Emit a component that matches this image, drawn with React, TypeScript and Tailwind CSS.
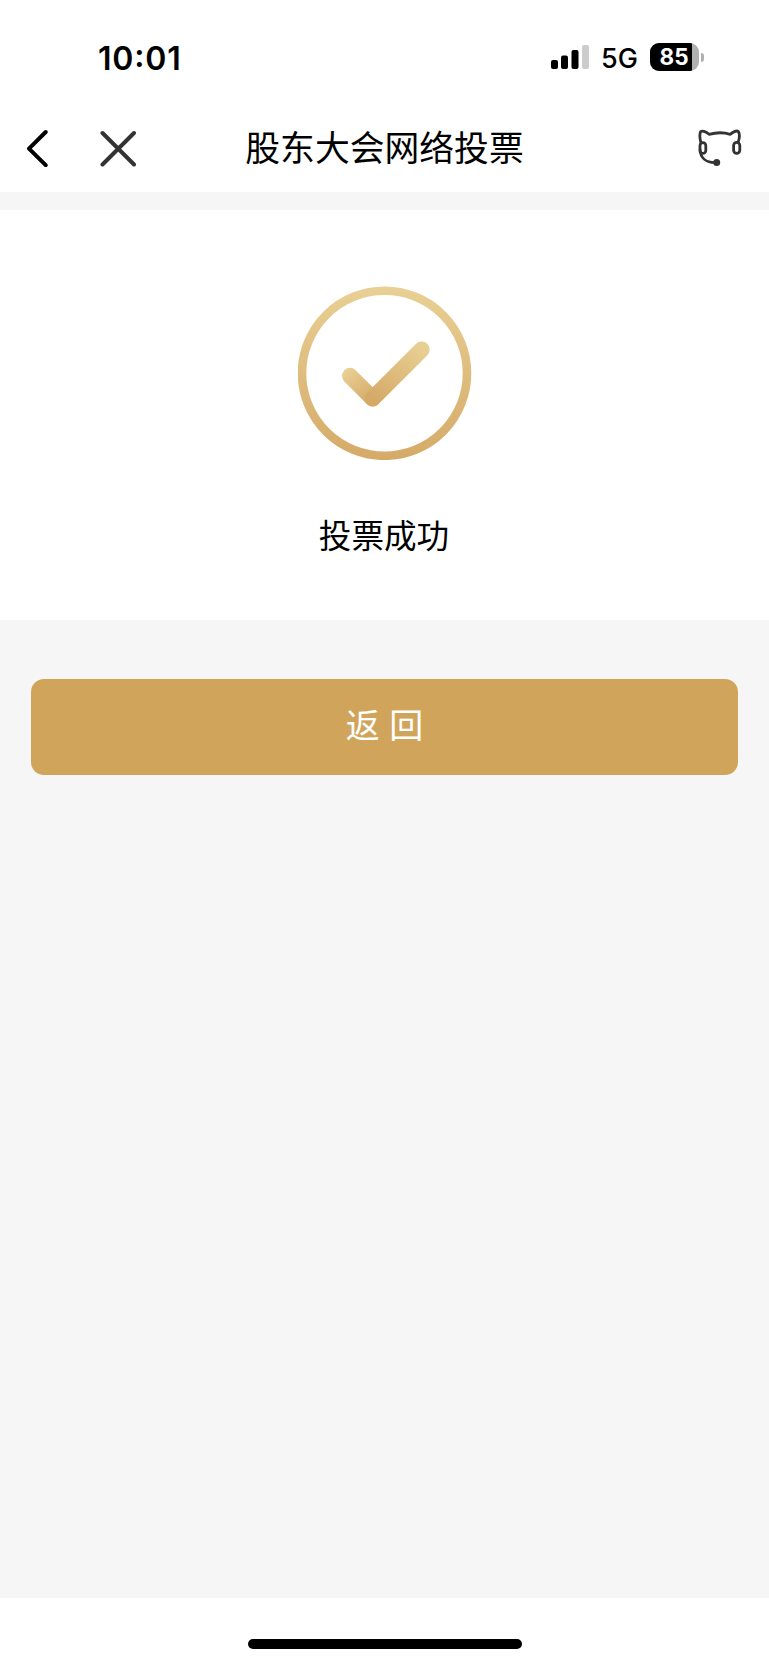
import React from 'react';

/** 状态栏：时间、信号、网络与电量 */
const StatusBar: React.FC = () => (
  <div className="flex h-[104px] items-start justify-between pt-[38px] pr-[65px] pl-[98px] font-['Inter',sans-serif] text-black">
    <span className="text-[32px] leading-[41px] font-semibold tracking-[0.8px] [font-feature-settings:'case'_1]">
      10:01
    </span>
    <div className="flex h-[38px] items-center">
      <svg className="h-[26px] w-[39px]" viewBox="0 0 39 26" aria-hidden="true">
        <rect x="0" y="16" width="7" height="9" rx="2" fill="#000" />
        <rect x="10" y="11.5" width="7" height="13.5" rx="2" fill="#000" />
        <rect x="20.5" y="6" width="7" height="19" rx="2" fill="#000" />
        <rect x="31" y="1" width="7" height="24" rx="2" fill="#ccc" />
      </svg>
      <span className="ml-[11px] w-[38px] pt-[3px] text-[27px] leading-[38px] font-[450]">5G</span>
      <div className="ml-[11px] flex h-[28px] w-[49px] overflow-hidden rounded-[9px] bg-[#b0b0b0]">
        <div className="flex w-[42px] items-center justify-center bg-black pl-[6px] text-[22.5px] leading-[28px] font-bold text-white">
          85
        </div>
      </div>
      <div className="ml-[2px] h-[9px] w-[3px] rounded-r-full bg-[#b0b0b0]" />
    </div>
  </div>
);

/** 导航栏：返回、关闭、标题与客服入口 */
const NavBar: React.FC = () => (
  <div className="flex h-[88px] items-start justify-between pr-[26px] pl-[26px]">
    <div className="flex w-[120px] justify-between pt-[25px]">
      <button aria-label="返回">
        <svg className="h-[38px] w-[24px]" viewBox="0 0 24 38" fill="none">
          <path
            d="M19.7 3L3 19.6L19.7 36.2"
            stroke="#000"
            strokeWidth="4"
            strokeLinecap="round"
            strokeLinejoin="round"
          />
        </svg>
      </button>
      <button aria-label="关闭" className="mr-[9px]">
        <svg className="h-[38px] w-[37px]" viewBox="0 0 37 38" fill="none">
          <path
            d="M2.5 4L34 35.5M34 4L2.5 35.5"
            stroke="#333"
            strokeWidth="4"
            strokeLinecap="round"
          />
        </svg>
      </button>
    </div>
    <h1 className="pt-[16px] text-[34.8px] leading-[52px] font-normal whitespace-nowrap">
      股东大会网络投票
    </h1>
    <div className="flex w-[120px] justify-end pt-[20px]">
      <button aria-label="客服">
        <svg
          className="h-[44px] w-[46px]"
          viewBox="0 0 46 44"
          fill="none"
          stroke="#333"
          strokeWidth="2.8"
          strokeLinecap="round"
          strokeLinejoin="round"
        >
          <path d="M4 19C2.6 14 2.4 10 3.7 7.5C4.8 6.6 8.6 7.2 12.1 10.3C18.5 8.5 27.5 8.5 33.4 10.3C36.9 7.2 40.2 6.6 41.4 7.5C42.7 10 42.7 14 41.2 18" />
          <rect x="3" y="18.6" width="5.8" height="10.8" rx="2.9" />
          <rect x="36.6" y="18.3" width="6.2" height="11" rx="3.1" />
          <path d="M3.1 26C3.5 34 9 38.6 18 38.6" />
          <circle cx="19.7" cy="38.6" r="3.5" fill="#333" stroke="none" />
        </svg>
      </button>
    </div>
  </div>
);

/** 成功图标：渐变圆环与对勾 */
const SuccessIcon: React.FC = () => (
  <svg className="h-[174px] w-[174px]" viewBox="0 0 174 174" fill="none" aria-hidden="true">
    <defs>
      <linearGradient id="ring" x1="87" y1="0" x2="87" y2="174" gradientUnits="userSpaceOnUse">
        <stop stopColor="#e9d094" />
        <stop offset="1" stopColor="#d5aa68" />
      </linearGradient>
      <linearGradient id="tick" x1="122" y1="58" x2="80" y2="116" gradientUnits="userSpaceOnUse">
        <stop stopColor="#e8d094" />
        <stop offset="1" stopColor="#d5aa68" />
      </linearGradient>
      <linearGradient id="tickShort" x1="48" y1="84" x2="73" y2="115" gradientUnits="userSpaceOnUse">
        <stop stopColor="#e8d094" />
        <stop offset="1" stopColor="#d5aa68" />
      </linearGradient>
    </defs>
    <circle cx="86.5" cy="87.3" r="82.5" stroke="url(#ring)" strokeWidth="8.6" />
    <path d="M52 89.8L74.7 112.5" stroke="url(#tickShort)" strokeWidth="16" strokeLinecap="round" />
    <path d="M74.7 112.5L123.7 63.5" stroke="url(#tick)" strokeWidth="16" strokeLinecap="round" />
  </svg>
);

const App: React.FC = () => {
  return (
    <div className="flex h-[1665px] w-full flex-col bg-white font-['Noto_Sans_CJK_SC',sans-serif] text-black">
      <StatusBar />
      <NavBar />

      {/* 投票结果 */}
      <main className="flex flex-1 flex-col bg-[#f6f6f6] pt-[18px]">
        <section className="flex h-[410px] flex-col items-center bg-white pt-[76px]">
          <SuccessIcon />
          <p className="mt-[50px] pr-px text-[32.6px] leading-[48px]">投票成功</p>
        </section>
        <div className="px-[31px] pt-[59px]">
          <button className="flex h-[96px] w-full items-center justify-center rounded-[13px] bg-[#d0a55b] pb-[6px] text-[34px] leading-[52px] font-normal text-white [word-spacing:2px]">
            返 回
          </button>
        </div>
      </main>

      {/* 底部指示条 */}
      <footer className="flex h-[67px] justify-center bg-white pt-[41px]">
        <div className="h-[10px] w-[274px] rounded-full bg-black" />
      </footer>
    </div>
  );
};

export default App;
